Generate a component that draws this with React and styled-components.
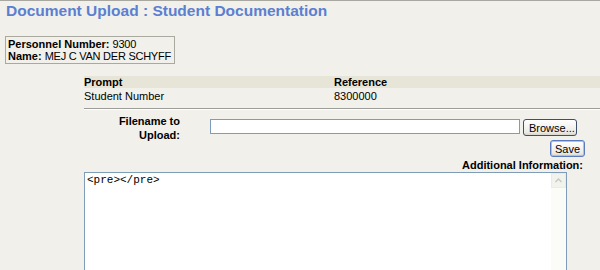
import React from "react";
import styled, { createGlobalStyle } from "styled-components";

const Global = createGlobalStyle`
  html, body { margin: 0; padding: 0; }
  body {
    background: #f1f0ea;
    font-family: "Liberation Sans", Arial, sans-serif;
    font-size: 11px;
    color: #000;
    width: 600px;
    height: 270px;
    overflow: hidden;
    border-top: 1px solid #a8a8a0;
    box-sizing: border-box;
  }
`;

const Page = styled.div`
  display: flex;
  flex-direction: column;
`;

const Title = styled.h1`
  margin: 0;
  padding: 1px 0 0 6px;
  font-family: "Liberation Sans", Arial, sans-serif;
  font-size: 15.5px;
  font-weight: bold;
  color: #5b7fd1;
  line-height: 18px;
`;

const InfoBox = styled.div`
  align-self: flex-start;
  margin: 16px 0 0 5px;
  border: 1px solid #a9a9a0;
  padding: 1px 3px 1px 2px;
  line-height: 12px;
`;

const Plain = styled.span`
  letter-spacing: -0.25px;
`;

const B = styled.b`
  font-weight: bold;
`;

const Section = styled.div`
  margin: ${(p) => p.$mt || 0}px 0 0 84px;
  display: flex;
  flex-direction: column;
`;

const Row = styled.div`
  display: grid;
  grid-template-columns: 250px 1fr;
  height: 12px;
  line-height: 12px;
  background: ${(p) => (p.$head ? "#e7e5d7" : "transparent")};
  font-weight: ${(p) => (p.$head ? "bold" : "normal")};
  margin-top: ${(p) => (p.$head ? "0" : "2px")};
`;

const Rule = styled.div`
  margin-top: 6px;
  height: 1px;
  background: #9c9c98;
  border-bottom: 1px solid #fff;
`;

const UploadRow = styled.div`
  display: flex;
  align-items: flex-start;
  height: 17px;
  margin-top: 9px;
`;

const Label = styled.div`
  width: 96px;
  flex: none;
  text-align: right;
  font-weight: bold;
  line-height: 14px;
  margin: -5px 30px 0 0;
`;

const FileInput = styled.div`
  width: 308px;
  height: 13px;
  border: 1px solid #7f9db9;
  background: #fff;
`;

const Button = styled.button`
  font-family: "Liberation Sans", Arial, sans-serif;
  font-size: 11px;
  color: #000;
  height: 17px;
  padding: 0 5px;
  border: 1px solid ${(p) => (p.$focus ? "#5a7bbd" : "#3f4f6a")};
  border-radius: 3px;
  background: linear-gradient(#ffffff, #ecebe6 80%, #d8d6cc);
  box-shadow: ${(p) => (p.$focus ? "inset 0 0 0 1px #a9c2ee" : "none")};
  line-height: 14px;
  cursor: default;
`;

const BrowseButton = styled(Button)`
  margin-left: 3px;
  width: 54px;
`;

const RightLine = styled.div`
  display: flex;
  justify-content: flex-end;
  padding-right: ${(p) => p.$pr}px;
  margin-top: ${(p) => p.$mt}px;
`;

const SaveButton = styled(Button)`
  width: 35px;
  padding: 0;
`;

const AddLabel = styled.div`
  font-weight: bold;
  line-height: 12px;
`;

const AreaBox = styled.div`
  margin-top: 1px;
  width: 481px;
  height: 110px;
  border: 1px solid #7f9db9;
  background: #fff;
  display: flex;
`;

const Area = styled.textarea`
  flex: 1;
  border: none;
  outline: none;
  resize: none;
  padding: 1px 2px;
  margin: 0;
  font-family: "Liberation Mono", "Courier New", monospace;
  font-size: 11px;
  line-height: 13px;
  color: #000;
  background: #fff;
  overflow: hidden;
`;

const Scrollbar = styled.div`
  width: 15px;
  background: #fbfbf8;
  display: flex;
  flex-direction: column;
`;

const ScrollUp = styled.div`
  height: 15px;
  background: #f3f3ee;
  border: 1px solid #ecebe4;
  box-sizing: border-box;
  display: flex;
  align-items: center;
  justify-content: center;
`;

export default function App() {
  return (
    <>
      <Global />
      <Page>
        <Title>Document Upload : Student Documentation</Title>
        <InfoBox>
          <B>Personnel Number:</B> <Plain>9300</Plain>
          <br />
          <B>Name:</B> <Plain>MEJ C VAN DER SCHYFF</Plain>
        </InfoBox>
        <Section $mt={12}>
          <Row $head>
            <span>Prompt</span>
            <span>Reference</span>
          </Row>
          <Row>
            <span>Student Number</span>
            <span>8300000</span>
          </Row>
          <Rule />
          <UploadRow>
            <Label>
              Filename to
              <br />
              Upload:
            </Label>
            <FileInput />
            <BrowseButton>Browse...</BrowseButton>
          </UploadRow>
        </Section>
        <RightLine $pr={15} $mt={4}>
          <SaveButton $focus>Save</SaveButton>
        </RightLine>
        <RightLine $pr={17} $mt={2}>
          <AddLabel>Additional Information:</AddLabel>
        </RightLine>
        <Section>
          <AreaBox>
            <Area defaultValue="<pre></pre>" />
            <Scrollbar>
              <ScrollUp>
                <svg width="7" height="5" viewBox="0 0 7 5">
                  <path d="M0.5 4 L3.5 1 L6.5 4" fill="none" stroke="#c7c7c0" strokeWidth="1.3" />
                </svg>
              </ScrollUp>
            </Scrollbar>
          </AreaBox>
        </Section>
      </Page>
    </>
  );
}
